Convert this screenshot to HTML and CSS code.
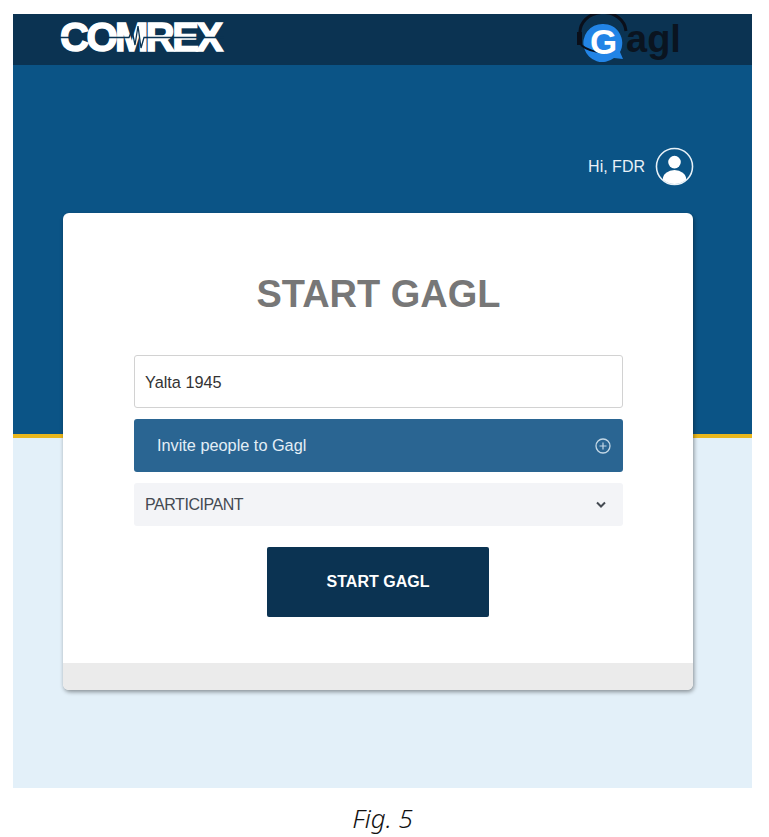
FILE: index.html
```html
<!DOCTYPE html>
<html lang="en">
    <head>
        <meta charset="utf-8" />
        <title>Start Gagl</title>
        <link rel="stylesheet" href="styles.css">
    </head>

    <body>
        <div class="app">
            <div class="topbar">
                <div class="comrex">
                    COMREX
                    <svg class="comrex-pulse" width="164" height="30" viewBox="0 0 164 30">
                        <path d="M0 14.500 H11 M44 14.500 H69 L72 7 L75 22 L78 3 L81 25 L84 14.500 H164" fill="none" stroke="#0b3352" stroke-width="1.300"/>
                    </svg>
                </div>
                <div class="gagl">
                    <svg class="gagl-badge" width="60" height="50" viewBox="0 0 60 50">
                        <path d="M3 20 A23 20 0 0 1 49 17" fill="none" stroke="#0a0f1a" stroke-width="3"/>
                        <path d="M26 10 A19 19 0 0 1 43 38 L46 45 L37 44 A19 19 0 1 1 26 10 Z" fill="#2284e6"/>
                        <path d="M2.500 18 V31" stroke="#0a0f1a" stroke-width="5" fill="none"/>
                        <path d="M4 31 Q12 38 29 39" stroke="#0a0f1a" stroke-width="2" fill="none"/>
                    </svg>
                    <span class="gagl-g">G</span>
                    <span class="gagl-rest">agl</span>
                </div>
            </div>
            <div class="stage">
                <div class="greeting">
                    <span>Hi, FDR</span>
                    <svg width="39" height="39" viewBox="0 0 40 40">
                        <defs>
                            <clipPath id="avatar-clip"><circle cx="20" cy="20" r="18"/></clipPath>
                        </defs>
                        <circle cx="20" cy="20" r="18.500" fill="none" stroke="#e8f1f7" stroke-width="1.600"/>
                        <circle cx="20" cy="15.500" r="6.500" fill="#fff"/>
                        <ellipse cx="20" cy="33" rx="12" ry="9.500" fill="#fff" clip-path="url(#avatar-clip)"/>
                    </svg>
                </div>
                <div class="card">
                    <div class="card-body">
                        <h1>START GAGL</h1>
                        <div class="field">Yalta 1945</div>
                        <div class="invite">
                            <span>Invite people to Gagl</span>
                            <svg width="16" height="16" viewBox="0 0 16 16">
                                <circle cx="8" cy="8" r="7" fill="none" stroke="#c4d8e6" stroke-width="1.300"/>
                                <path d="M8 4.500 V11.500 M4.500 8 H11.500" stroke="#c4d8e6" stroke-width="1.200"/>
                            </svg>
                        </div>
                        <div class="select">
                            <span>PARTICIPANT</span>
                            <svg width="10" height="8" viewBox="0 0 10 8">
                                <path d="M1 1.500 L5 5.500 L9 1.500" fill="none" stroke="#444a52" stroke-width="2"/>
                            </svg>
                        </div>
                        <div class="start">START GAGL</div>
                    </div>
                    <div class="card-foot"></div>
                </div>
            </div>
        </div>
        <div class="caption">Fig. 5</div>
    </body>
</html>
```

FILE: styles.css
```css
body {
    margin: 0;
    background-color: #fff;
    font-family: "Liberation Sans", Arial, sans-serif;
}
.app {
    width: 739px;
    margin: 14px 0 0 13px;
}
.topbar {
    height: 51px;
    background-color: #0b3352;
    display: flex;
    justify-content: space-between;
}
.comrex {
    position: relative;
    height: 51px;
    margin-left: 47px;
    font-size: 40px;
    font-weight: bold;
    line-height: 47px;
    letter-spacing: -2.500px;
    color: #fff;
    -webkit-text-stroke: 1.500px #fff;
}
.comrex-pulse {
    position: absolute;
    left: 0;
    top: 9px;
}
.gagl {
    position: relative;
    width: 105px;
    margin-right: 70px;
}
.gagl-badge {
    position: absolute;
    left: 0;
    top: 0;
}
.gagl-g {
    position: absolute;
    left: 13px;
    top: 8px;
    font-size: 35px;
    font-weight: bold;
    line-height: 40px;
    color: #fff;
}
.gagl-rest {
    position: absolute;
    left: 49px;
    top: 0;
    font-size: 38px;
    font-weight: bold;
    line-height: 50px;
    color: #0a1420;
}
.stage {
    height: 723px;
    padding: 82px 59px 0 50px;
    box-sizing: border-box;
    background: linear-gradient(#0b5486 369px, #eab71c 369px, #eab71c 373px, #e3f0f9 373px);
}
.greeting {
    height: 39px;
    display: flex;
    align-items: center;
    justify-content: flex-end;
    gap: 10px;
    margin-right: -1px;
    color: #e8f1f7;
    font-size: 16px;
}
.card {
    margin-top: 27px;
    width: 630px;
    background-color: #fff;
    border-radius: 6px;
    overflow: hidden;
    box-shadow: 1px 2px 4px rgba(0, 0, 0, 0.4);
}
.card-body {
    height: 450px;
    padding: 0 70px 0 71px;
    display: flex;
    flex-direction: column;
    box-sizing: border-box;
}
h1 {
    margin: 60px 0 40px 0;
    height: 42px;
    line-height: 42px;
    text-align: center;
    font-size: 38px;
    color: #777;
}
.field {
    height: 53px;
    box-sizing: border-box;
    padding-left: 10px;
    line-height: 53px;
    border: 1px solid #d2d2d2;
    border-radius: 3px;
    font-size: 16.300px;
    color: #333;
}
.invite {
    height: 53px;
    margin-top: 11px;
    padding: 0 12px 0 23px;
    display: flex;
    align-items: center;
    justify-content: space-between;
    background-color: #2a6592;
    border-radius: 3px;
    font-size: 16.300px;
    color: #e3eef6;
}
.select {
    height: 43px;
    margin-top: 11px;
    padding: 0 17px 0 11px;
    display: flex;
    align-items: center;
    justify-content: space-between;
    background-color: #f3f4f7;
    border-radius: 3px;
    font-size: 16px;
    letter-spacing: -0.450px;
    color: #444a52;
}
.start {
    width: 222px;
    height: 70px;
    margin: 21px 0 0 133px;
    line-height: 70px;
    text-align: center;
    background-color: #0b3352;
    border-radius: 2px;
    font-size: 16px;
    font-weight: bold;
    color: #fff;
}
.card-foot {
    height: 27px;
    background-color: #ebebeb;
}
.caption {
    margin-top: 14px;
    padding-right: 4px;
    text-align: center;
    font-family: "Noto Sans", sans-serif;
    font-style: italic;
    font-weight: 300;
    font-size: 26px;
    line-height: 32px;
    color: #111;
}
```
